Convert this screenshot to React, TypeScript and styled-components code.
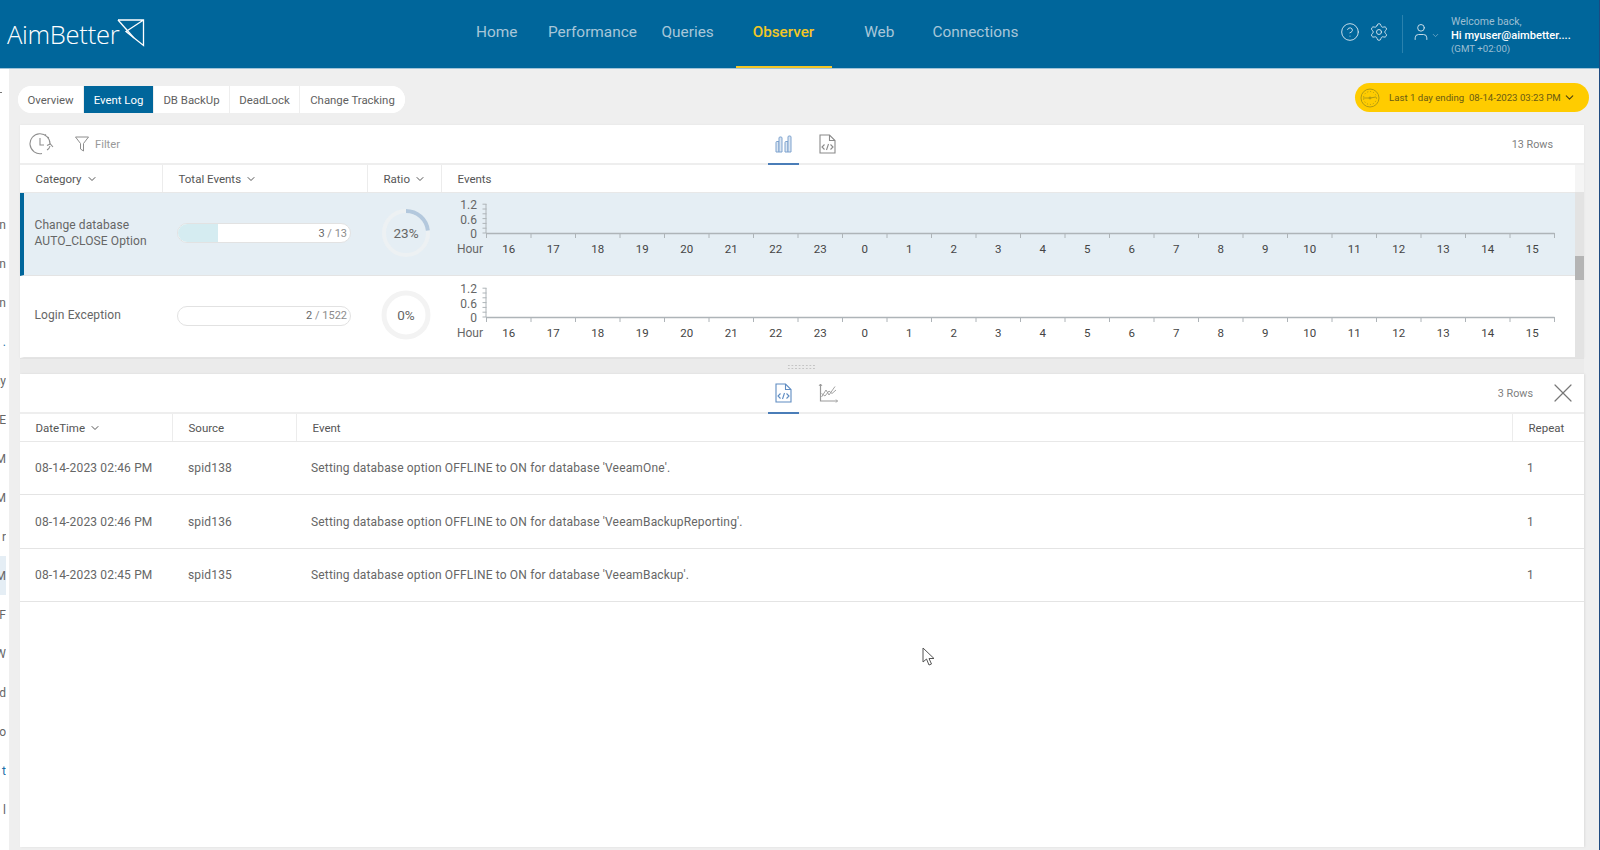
import React from "react";
import styled, { createGlobalStyle } from "styled-components";
import { ChevronDown, CircleHelp, Settings, User, X } from "lucide-react";

const Global = createGlobalStyle`
  html, body { margin: 0; padding: 0; background: #efefef; }
  body { font-family: Roboto, "Liberation Sans", sans-serif; overflow: hidden; }
  * { box-sizing: border-box; }
`;

const Root = styled.div`
  width: 1600px; height: 850px; display: flex; flex-direction: column;
  background: #efefef; border-right: 1px solid #1f4a80; overflow: hidden; position: relative;
`;
const Header = styled.header`
  height: 69px; flex: none; display: flex; align-items: stretch; background: #00669b;
  border-bottom: 1px solid #9fc3d8; color: #fff;
`;
const LogoBox = styled.div`
  width: 476px; flex: none; display: flex; align-items: flex-start; padding: 19px 0 0 7px;
`;
const LogoText = styled.span`
  font-family: "Open Sans", sans-serif; font-weight: 300; font-size: 25.6px; line-height: 32px;
  letter-spacing: -0.3px; color: #fff;
`;
const LogoMark = styled.svg`
  width: 28px; height: 28px; flex: none; margin-left: -2px;
`;
const Nav = styled.nav`display: flex; align-items: stretch; height: 68px;`;
const NavItem = styled.a<{ $gap: number; $active?: boolean }>`
  margin-left: ${(p) => p.$gap}px;
  padding: ${(p) => (p.$active ? "23px 18px 0 17px" : "23px 0 0")};
  font-size: ${(p) => (p.$active ? 15.2 : 15.4)}px; line-height: 18px; white-space: nowrap;
  color: ${(p) => (p.$active ? "#f3c626" : "#a8c6d9")};
  font-weight: ${(p) => (p.$active ? 500 : 400)};
  border-bottom: 2px solid ${(p) => (p.$active ? "#f3c626" : "transparent")};
`;
const HeaderRight = styled.div`
  margin-left: auto; display: flex; align-items: flex-start; height: 68px; padding-top: 15px; width: 259px; flex: none;
  color: #d8e6ef;
`;
const HeadIcon = styled.span<{ $w: number }>`
  width: ${(p) => p.$w}px; flex: none; display: flex; justify-content: center; padding-top: 7px;
`;
const HeadDivider = styled.span`
  width: 1px; height: 38px; background: #2a82ae; margin: 0 8px 0 4px; flex: none;
`;
const Small = styled.span`
  display: flex; width: 14px; flex: none; padding-top: 16px; color: #7fb0cc; margin-right: 6px;
`;
const Welcome = styled.div`display: flex; flex-direction: column; white-space: nowrap;`;
const WelcomeLine = styled.span<{ $kind: "muted" | "name" | "zone" }>`
  color: ${(p) => (p.$kind === "name" ? "#fff" : "#9dbfd3")};
  font-size: ${(p) => (p.$kind === "name" ? 11.1 : p.$kind === "zone" ? 9.7 : 10.5)}px;
  font-weight: ${(p) => (p.$kind === "name" ? 500 : 400)};
  line-height: ${(p) => (p.$kind === "name" ? 15 : p.$kind === "zone" ? 11 : 13)}px;
`;

const Body = styled.div`flex: 1; min-height: 0; display: flex;`;
const Sidebar = styled.aside`
  width: 9px; flex: none; background: #fff; padding-top: 136px; position: relative;
`;
const SideTick = styled.span`
  position: absolute; left: 0; top: 23px; width: 2px; height: 1px; background: #777;
`;
const SideItem = styled.div<{ $on?: boolean; $blue?: boolean }>`
  width: 6px; height: 39px; overflow: hidden; display: flex; align-items: center; justify-content: flex-end;
  font-size: 12px; color: ${(p) => (p.$blue ? "#1b6fa8" : "#666")};
  background: ${(p) => (p.$on ? "#e5eef5" : "transparent")}; white-space: nowrap;
`;
const Main = styled.main`
  width: 1564px; margin-left: 11px; padding-top: 14px; display: flex; flex-direction: column; height: 778px;
`;
const TopRow = styled.div`
  height: 42px; flex: none; margin: 0 -5px 0 -2px; display: flex; justify-content: space-between; align-items: flex-start;
`;
const Tabs = styled.div`
  margin-top: 3px; height: 27px; display: flex; background: #fff; border-radius: 14px; overflow: hidden;
`;
const Tab = styled.div<{ $w: number; $active?: boolean }>`
  width: ${(p) => p.$w}px; display: flex; align-items: center; justify-content: center;
  font-size: 11.4px; color: ${(p) => (p.$active ? "#fff" : "#5f5f5f")};
  background: ${(p) => (p.$active ? "#00669b" : "#fff")};
  border-right: 1px solid #eee;
  &:last-child { border-right: none; }
`;
const DatePill = styled.div`
  width: 234px; height: 29px; border-radius: 15px; background: #ffcc00; display: flex; align-items: center;
  padding-left: 5px; color: #6a5b14; font-size: 9.65px; white-space: pre;
`;
const PillText = styled.span`margin-left: 9px; margin-right: 2px;`;

const TopPanel = styled.section`
  height: 233px; flex: none; background: #fff; display: flex; flex-direction: column; box-shadow: 0 0 2px rgba(0,0,0,.06);
`;
const Toolbar = styled.div<{ $h: number }>`
  height: ${(p) => p.$h}px; flex: none; display: flex; align-items: stretch; border-bottom: 2px solid #eeeeee;
`;
const ToolLeft = styled.div`
  width: 748px; flex: none; display: flex; align-items: center; padding: 0 0 0 9px;
`;
const FilterLabel = styled.span`font-size: 11.2px; color: #999; margin-left: 6px;`;
const FilterIcon = styled.svg`margin-left: 20px; width: 14px; height: 16px; flex: none;`;
const IconTab = styled.div<{ $active?: boolean }>`
  width: 31px; margin-right: 13px; display: flex; align-items: center; justify-content: center; margin-bottom: -2px;
  border-bottom: 2px solid ${(p) => (p.$active ? "#4a7db8" : "transparent")};
`;
const RowCount = styled.div<{ $pr: number }>`
  margin-left: auto; padding-right: ${(p) => p.$pr}px; display: flex; align-items: center; font-size: 10.8px; color: #808080;
`;
const CloseBtn = styled.span`
  display: flex; align-items: center; padding-right: 5px; color: #777;
`;
const TableWrap = styled.div`flex: 1; min-height: 0; display: flex;`;
const TableArea = styled.div`width: 1555px; flex: none; display: flex; flex-direction: column;`;
const Scrollbar = styled.div`
  width: 9px; flex: none; background: linear-gradient(#f5f5f5 0 27px, #e3e3e3 27px); padding-top: 91px;
`;
const Thumb = styled.div`height: 24px; background: #b4b4b4;`;
const HeadRow = styled.div<{ $cols: string; $h: number }>`
  height: ${(p) => p.$h}px; flex: none; display: grid; grid-template-columns: ${(p) => p.$cols};
  border-bottom: 1px solid #e8e8e8;
`;
const HeadCell = styled.div`
  display: flex; align-items: center; gap: 4px; padding: 1px 0 0 15.5px; font-size: 11.5px; color: #555;
  border-right: 1px solid #ececec;
  &:last-child { border-right: none; }
`;
const CatRow = styled.div<{ $sel?: boolean; $h: number }>`
  height: ${(p) => p.$h}px; flex: none; display: grid; grid-template-columns: 139px 205px 74px 1fr;
  background: ${(p) => (p.$sel ? "#e5eef4" : "#fff")}; border-bottom: 1px solid #e4e4e4;
  border-left: 4px solid ${(p) => (p.$sel ? "#00669b" : "transparent")};
`;
const CatName = styled.div`
  padding: 0 0 1px 10.5px; display: flex; align-items: center; font-size: 12px; line-height: 15.5px; color: #666; letter-spacing: 0.1px;
`;
const BarCell = styled.div`
  display: flex; align-items: center; padding: 0 0 2px 14px;
`;
const Bar = styled.div`
  width: 174px; height: 20px; border-radius: 10px; background: #fff; border: 1px solid #e2e2e2; position: relative; overflow: hidden;
  display: flex; align-items: center; justify-content: flex-end; padding-right: 3px;
`;
const BarFill = styled.div`position: absolute; left: 0; top: 0; bottom: 0; background: #d5ecf1;`;
const BarText = styled.span`font-size: 11px; color: #666; position: relative;`;
const BarTotal = styled.span`color: #8c8c8c;`;
const RingCell = styled.div`display: flex; align-items: center; justify-content: center; padding: 0 0 3px 2px;`;
const RingSvg = styled.svg`width: 50px; height: 50px;`;
const ChartCell = styled.div`min-width: 0;`;
const ChartSvg = styled.svg`display: block; width: 1129px; height: 80px;`;

const Splitter = styled.div`
  height: 16px; flex: none; display: flex; align-items: center; justify-content: center;
  background: #ebebeb; border-top: 1px solid #e2e2e2;
`;
const Grip = styled.span`
  width: 29px; height: 6px; margin-left: -2px;
  background-image: radial-gradient(#c4c4c4 1px, transparent 1.2px);
  background-size: 3.6px 3px;
`;
const LowerPanel = styled.section`
  flex: 1; min-height: 0; background: #fff; display: flex; flex-direction: column;
  box-shadow: 1px 0 2px rgba(0,0,0,.08);
`;
const LogRow = styled.div<{ $h: number }>`
  height: ${(p) => p.$h}px; flex: none; display: grid; grid-template-columns: 153px 124px 1216px 1fr; align-items: center;
  border-bottom: 1px solid #e4e4e4; font-size: 12px; color: #666; letter-spacing: 0.16px;
`;
const LogCell = styled.div<{ $pl: number }>`padding-left: ${(p) => p.$pl}px; white-space: nowrap;`;
const Cursor = styled.svg`position: absolute; left: 922px; top: 647px; width: 14px; height: 20px;`;

const hours = [16,17,18,19,20,21,22,23,0,1,2,3,4,5,6,7,8,9,10,11,12,13,14,15];
const sideItems: { t: string; on?: boolean; blue?: boolean }[] = [
  { t: "n" }, { t: "n" }, { t: "n" }, { t: ".", blue: true }, { t: "ay" }, { t: "E" }, { t: "M" }, { t: "M" },
  { t: "r" }, { t: "M", on: true }, { t: "F" }, { t: "W" }, { t: "d" }, { t: "o" }, { t: "t", blue: true }, { t: "l" },
];

function Chart({ y0 }: { y0: number }) {
  const x0 = 44.5, step = 44.5;
  const minor = [0, 1, 2, 3, 4, 5, 6].map((i) => y0 - i * 4.8);
  const ticks = Array.from({ length: 25 }, (_, i) => x0 + i * step);
  return (
    <ChartSvg viewBox="0 0 1129 80">
      <g stroke="#aeb4b8" strokeWidth="1" fill="none">
        <path d={`M${x0 - 0.5} ${y0 - 29}V${y0}`} />
        {minor.map((y) => <path key={y} d={`M${x0 - 4} ${y}H${x0}`} />)}
        <path d={`M${x0} ${y0 + 0.5}H${ticks[24]}`} strokeWidth="1.3" />
        {ticks.map((x) => <path key={x} d={`M${x} ${y0}V${y0 + 5}`} />)}
      </g>
      <g fontSize="12" fill="#666" fontFamily="Roboto, sans-serif" textAnchor="end">
        <text x="35" y={y0 - 24}>1.2</text>
        <text x="35" y={y0 - 9}>0.6</text>
        <text x="35" y={y0 + 5}>0</text>
        <text x="41" y={y0 + 20}>Hour</text>
      </g>
      <g fontSize="11.5" fill="#444" fontFamily="Roboto, sans-serif" textAnchor="middle">
        {hours.map((h, i) => <text key={i} x={x0 + step * (i + 0.5)} y={y0 + 20}>{h}</text>)}
      </g>
    </ChartSvg>
  );
}

function Ring({ pct, track, sw }: { pct: number; track: string; sw: number }) {
  const r = 22, c = 2 * Math.PI * r, len = (c * pct) / 100;
  return (
    <RingSvg viewBox="0 0 50 50">
      <circle cx="25" cy="25" r={r} fill="none" stroke={track} strokeWidth={sw} />
      {pct > 0 && (
        <circle cx="25" cy="25" r={r} fill="none" stroke="#b3c8dd" strokeWidth={sw}
          strokeDasharray={`${len} ${c}`} transform="rotate(-90 25 25)" />
      )}
      <text x="25" y="30" textAnchor="middle" fontSize="13.5" fill="#666" fontFamily="Roboto, sans-serif">{pct}%</text>
    </RingSvg>
  );
}

const BarsIcon = () => (
  <svg width="18" height="20" viewBox="0 0 18 20" fill="#dbe6f2" stroke="#7ea3cf" strokeWidth="1">
    <path d="M1 18V8.5Q1 7.5 2 7.5H4V18Z" />
    <path d="M4 18V4Q4 3 5 3H6Q7 3 7 4V18Z" />
    <path d="M10 18V8.5Q10 7.5 11 7.5H13V18Z" />
    <path d="M13 18V3Q13 2 14 2H15Q16 2 16 3V18Z" />
  </svg>
);
const FileCodeIcon = ({ color }: { color: string }) => (
  <svg width="17" height="20" viewBox="0 0 17 20" fill="none" stroke={color} strokeWidth="1.1">
    <path d="M1 1H10.5L16 6.5V19H1Z" />
    <path d="M10.5 1V6.5H16" />
    <path d="M5.5 10.5L3 13L5.5 15.5M11.5 10.5L14 13L11.5 15.5M9.5 10L7.5 16" />
  </svg>
);
const LineChartIcon = () => (
  <svg width="20" height="20" viewBox="0 0 20 20" fill="none" stroke="#999" strokeWidth="0.9">
    <path d="M2.5 1V18H19.5" strokeWidth="1.2" />
    <path d="M1 3L2.5 1L4 3M18 16.5L19.5 18L18 19.5" />
    <path d="M3.5 14L8 7L11 12L17 3.5" />
    <path d="M3.5 10.5L7 13L11 8L14 10.5L18 7" />
  </svg>
);
const HistoryIcon = () => (
  <svg width="26" height="24" viewBox="0 0 26 24" fill="none" stroke="#8e8e8e" strokeWidth="1.1" style={{ flex: "none" }}>
    <path d="M21 12A10 10 0 1 0 13 21.5" />
    <path d="M11 6V13H15" />
    <path d="M18 18A6 6 0 0 0 21 14M18 13.5L21.3 12L24 15" />
    <path d="M16 2.5L17 3.2M19 5L19.8 6" />
  </svg>
);
const GaugeIcon = () => (
  <svg width="20" height="20" viewBox="0 0 20 20" fill="none" stroke="#b39b12" strokeWidth="1" style={{ flex: "none" }}>
    <circle cx="10" cy="10" r="9" />
    <circle cx="10" cy="10" r="6.5" strokeDasharray="1 2" />
    <path d="M3 10H10L16 9" />
    <circle cx="10" cy="10" r="1" fill="#b39b12" />
  </svg>
);

export default function App() {
  return (
    <Root>
      <Global />
      <Header>
        <LogoBox>
          <LogoText>AimBetter</LogoText>
          <LogoMark viewBox="0 0 28 28" fill="none" stroke="#fff" strokeWidth="1.3">
            <path d="M1 1H26.5V26.5L9 12.5L26.5 1" />
            <path d="M1 1L17 19" />
          </LogoMark>
        </LogoBox>
        <Nav>
          <NavItem $gap={0}>Home</NavItem>
          <NavItem $gap={30.5}>Performance</NavItem>
          <NavItem $gap={24.5}>Queries</NavItem>
          <NavItem $gap={22} $active>Observer</NavItem>
          <NavItem $gap={32}>Web</NavItem>
          <NavItem $gap={38}>Connections</NavItem>
        </Nav>
        <HeaderRight>
          <HeadIcon $w={20}><CircleHelp size={20} strokeWidth={1.1} /></HeadIcon>
          <HeadIcon $w={38}><Settings size={20} strokeWidth={1.1} /></HeadIcon>
          <HeadDivider />
          <HeadIcon $w={20}><User size={20} strokeWidth={1.1} /></HeadIcon>
          <Small><ChevronDown size={9} /></Small>
          <Welcome>
            <WelcomeLine $kind="muted">Welcome back,</WelcomeLine>
            <WelcomeLine $kind="name">Hi myuser@aimbetter....</WelcomeLine>
            <WelcomeLine $kind="zone">(GMT +02:00)</WelcomeLine>
          </Welcome>
        </HeaderRight>
      </Header>
      <Body>
        <Sidebar>
          <SideTick />
          {sideItems.map((s, i) => <SideItem key={i} $on={s.on} $blue={s.blue}>{s.t}</SideItem>)}
        </Sidebar>
        <Main>
          <TopRow>
            <Tabs>
              <Tab $w={66}>Overview</Tab>
              <Tab $w={70} $active>Event Log</Tab>
              <Tab $w={76}>DB BackUp</Tab>
              <Tab $w={70}>DeadLock</Tab>
              <Tab $w={105}>Change Tracking</Tab>
            </Tabs>
            <DatePill>
              <GaugeIcon />
              <PillText>Last 1 day ending  08-14-2023 03:23 PM</PillText>
              <ChevronDown size={13} color="#4a4010" strokeWidth={2} />
            </DatePill>
          </TopRow>
          <TopPanel>
            <Toolbar $h={40}>
              <ToolLeft>
                <HistoryIcon />
                <FilterIcon viewBox="0 0 14 16" fill="none" stroke="#8e8e8e" strokeWidth="1">
                  <path d="M0.5 1H13.5L8.5 7.5V15L5.5 13V7.5Z" />
                </FilterIcon>
                <FilterLabel>Filter</FilterLabel>
              </ToolLeft>
              <IconTab $active><BarsIcon /></IconTab>
              <IconTab><FileCodeIcon color="#8a8a8a" /></IconTab>
              <RowCount $pr={31}>13 Rows</RowCount>
            </Toolbar>
            <TableWrap>
              <TableArea>
                <HeadRow $cols="143px 205px 74px 1fr" $h={28}>
                  <HeadCell>Category <ChevronDown size={12} /></HeadCell>
                  <HeadCell>Total Events <ChevronDown size={12} /></HeadCell>
                  <HeadCell>Ratio <ChevronDown size={12} /></HeadCell>
                  <HeadCell>Events</HeadCell>
                </HeadRow>
                <CatRow $sel $h={83}>
                  <CatName>Change database<br />AUTO_CLOSE Option</CatName>
                  <BarCell>
                    <Bar>
                      <BarFill style={{ width: `${(3 / 13) * 100}%` }} />
                      <BarText>3 <BarTotal>/ 13</BarTotal></BarText>
                    </Bar>
                  </BarCell>
                  <RingCell><Ring pct={23} track="#edf1f3" sw={4} /></RingCell>
                  <ChartCell><Chart y0={40} /></ChartCell>
                </CatRow>
                <CatRow $h={82}>
                  <CatName>Login Exception</CatName>
                  <BarCell>
                    <Bar>
                      <BarText>2 <BarTotal>/ 1522</BarTotal></BarText>
                    </Bar>
                  </BarCell>
                  <RingCell><Ring pct={0} track="#f3f3f3" sw={5} /></RingCell>
                  <ChartCell><Chart y0={41} /></ChartCell>
                </CatRow>
              </TableArea>
              <Scrollbar><Thumb /></Scrollbar>
            </TableWrap>
          </TopPanel>
          <Splitter><Grip /></Splitter>
          <LowerPanel>
            <Toolbar $h={40}>
              <ToolLeft />
              <IconTab $active><FileCodeIcon color="#5f8cc2" /></IconTab>
              <IconTab><LineChartIcon /></IconTab>
              <RowCount $pr={14}>3 Rows</RowCount>
              <CloseBtn><X size={32} strokeWidth={0.9} /></CloseBtn>
            </Toolbar>
            <HeadRow $cols="153px 124px 1216px 1fr" $h={28}>
              <HeadCell>DateTime <ChevronDown size={12} /></HeadCell>
              <HeadCell>Source</HeadCell>
              <HeadCell>Event</HeadCell>
              <HeadCell>Repeat</HeadCell>
            </HeadRow>
            {[
              ["08-14-2023 02:46 PM", "spid138", "Setting database option OFFLINE to ON for database 'VeeamOne'.", 53],
              ["08-14-2023 02:46 PM", "spid136", "Setting database option OFFLINE to ON for database 'VeeamBackupReporting'.", 54],
              ["08-14-2023 02:45 PM", "spid135", "Setting database option OFFLINE to ON for database 'VeeamBackup'.", 53],
            ].map(([d, s, e, h], i) => (
              <LogRow key={i} $h={h as number}>
                <LogCell $pl={15}>{d}</LogCell>
                <LogCell $pl={15}>{s}</LogCell>
                <LogCell $pl={14}>{e}</LogCell>
                <LogCell $pl={14}>1</LogCell>
              </LogRow>
            ))}
          </LowerPanel>
        </Main>
      </Body>
      <Cursor viewBox="0 0 14 20" fill="#fff" stroke="#555" strokeWidth="1">
        <path d="M1 1V15L4.5 12L7 18L9.5 17L7 11.5H12Z" />
      </Cursor>
    </Root>
  );
}
